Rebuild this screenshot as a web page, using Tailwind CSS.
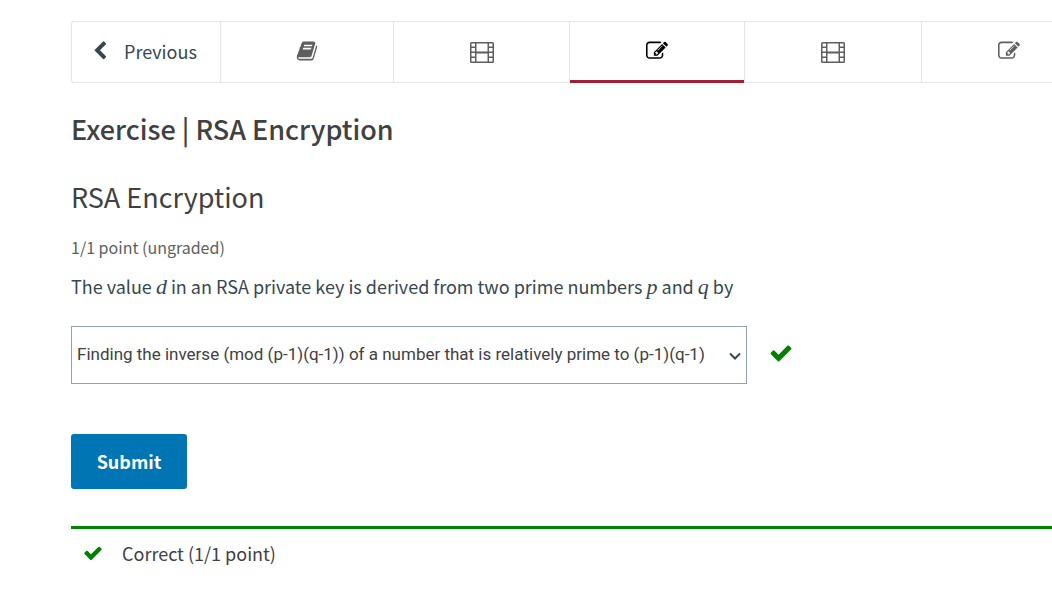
<!DOCTYPE html>
<html lang="en">
<head>
<meta charset="utf-8">
<meta name="viewport" content="width=device-width, initial-scale=1">
<title>Exercise | RSA Encryption</title>
<script src="https://cdn.jsdelivr.net/npm/@tailwindcss/browser@4"></script>
</head>
<body class="overflow-x-hidden bg-white font-['Noto_Sans_CJK_SC','Open_Sans',sans-serif] text-[#414141]">
<svg class="hidden" aria-hidden="true">
  <symbol id="check" viewBox="0 0 1792 1792"><path d="M1671 566q0 40-28 68l-724 724-136 136q-28 28-68 28t-68-28l-136-136-362-362q-28-28-28-68t28-68l136-136q28-28 68-28t68 28l294 295 656-657q28-28 68-28t68 28l136 136q28 28 28 68z"/></symbol>
  <symbol id="edit" viewBox="0 0 1792 1792"><path d="M888 1184l116-116-152-152-116 116v56h96v96h56zm440-720q-16-16-33 1l-350 350q-17 17-1 33t33-1l350-350q17-17 1-33zm80 594v190q0 119-84.500 203.500t-203.500 84.500h-832q-119 0-203.500-84.500t-84.500-203.500v-832q0-119 84.500-203.500t203.500-84.500h832q63 0 117 25 15 7 18 23 3 17-9 29l-49 49q-14 14-32 8-23-6-45-6h-832q-66 0-113 47t-47 113v832q0 66 47 113t113 47h832q66 0 113-47t47-113v-126q0-13 9-22l64-64q15-15 35-7t20 29zm-96-738l288 288-672 672h-288v-288zm444 132l-92 92-288-288 92-92q28-28 68-28t68 28l152 152q28 28 28 68t-28 68z"/></symbol>
  <symbol id="film" viewBox="0 0 24 21"><path fill-rule="evenodd" d="M1.500 0h21Q24 0 24 1.500v18q0 1.500-1.500 1.500h-21Q0 21 0 19.500v-18Q0 0 1.500 0zM1.500 1.500v3h3.500v-3zM1.500 6v3.500h3.500V6zM1.500 11v3.500h3.500V11zM1.500 16v3.500h3.500V16zM6.500 1.500v8h11v-8zM6.500 11.500v8h11v-8zM19 1.500v3h3.500v-3zM19 6v3.500h3.500V6zM19 11v3.500h3.500V11zM19 16v3.500h3.500V16z"/></symbol>
</svg>
<main class="pt-[21px] pl-[71px]">
  <nav aria-label="Unit sequence" class="flex h-[62px] overflow-hidden rounded-l-[3px] border border-r-0 border-[#e5e5e5] text-[#5e5e5e]">
    <button type="button" class="flex w-[148px] flex-none items-center gap-[14px] pb-0.5 pl-[18px] text-lg text-[#37474f]">
      <svg class="size-5 fill-current" viewBox="0 0 1792 1792" aria-hidden="true"><path d="M1427 301l-531 531 531 531q19 19 19 45t-19 45l-166 166q-19 19-45 19t-45-19l-742-742q-19-19-19-45t19-45l742-742q19-19 45-19t45 19l166 166q19 19 19 45t-19 45z"/></svg>
      <span>Previous</span>
    </button>
    <button type="button" aria-label="Reading" class="flex w-[173px] flex-none items-center justify-center border-l border-[#e5e5e5] pb-0.5">
      <svg class="size-[22px] fill-current" viewBox="0 0 1792 1792" aria-hidden="true"><path d="M1703 478q40 57 18 129l-275 906q-19 64-76.500 107.500t-122.500 43.500h-923q-77 0-148.500-53.500t-99.500-131.500q-24-67-2-127 0-4 3-27t4-37q1-8-3-21.500t-3-19.500q2-11 8-21t16.500-23.500 16.500-23.500q23-38 45-91.500t30-91.500q3-10 .5-30t-.5-28q3-11 17-28t17-23q21-36 42-92t25-90q1-9-2.500-32t.5-28q4-13 22-30.500t22-22.500q19-26 42.500-84.500t27.500-96.500q1-8-3-25.500t-2-26.500q2-8 9-18t18-23 17-21q8-12 16.500-30.500t15-35 16-36 19.500-32 26.500-23.500 36-11.500 47.500 5.500l-1 3q38-9 51-9h761q74 0 114 56t18 130l-274 906q-36 119-71.500 153.500t-128.500 34.500h-869q-27 0-38 15-11 16-1 43 24 70 144 70h923q29 0 56-15.500t35-41.500l300-987q7-22 5-57 38 15 59 43zm-1064 2q-4 13 2 22.500t20 9.500h608q13 0 25.500-9.500t16.500-22.500l21-64q4-13-2-22.500t-20-9.500h-608q-13 0-25.500 9.500t-16.500 22.500zm-83 256q-4 13 2 22.500t20 9.500h608q13 0 25.500-9.500t16.500-22.500l21-64q4-13-2-22.500t-20-9.500h-608q-13 0-25.500 9.500t-16.500 22.500z"/></svg>
    </button>
    <button type="button" aria-label="Video" class="flex w-[176px] flex-none items-center justify-center border-l border-[#e5e5e5]">
      <svg class="h-[21px] w-6 fill-current" aria-hidden="true"><use href="#film"/></svg>
    </button>
    <button type="button" aria-label="Exercise" aria-current="page" class="flex w-[175px] flex-none items-center justify-center border-l border-[#e5e5e5] pb-0.5 text-black">
      <svg class="size-[22px] fill-current" aria-hidden="true"><use href="#edit"/></svg>
    </button>
    <button type="button" aria-label="Video" class="flex w-[177px] flex-none items-center justify-center border-l border-[#e5e5e5]">
      <svg class="h-[21px] w-6 fill-current" aria-hidden="true"><use href="#film"/></svg>
    </button>
    <button type="button" aria-label="Exercise" class="flex w-[175px] flex-none items-center justify-center border-l border-[#e5e5e5] pb-0.5">
      <svg class="size-[22px] fill-current" aria-hidden="true"><use href="#edit"/></svg>
    </button>
  </nav>
  <div class="-mt-[3px] ml-[499px] h-[3px] w-[174px]"><div class="relative h-full bg-[#a31f34]"></div></div>
  <h1 class="mt-[26px] text-[27px] leading-10 font-medium">Exercise | RSA Encryption</h1>
  <h2 class="mt-7 text-[27px] leading-10">RSA Encryption</h2>
  <p class="mt-[18px] text-base leading-6 text-[#5e5e5e]">1/1 point (ungraded)</p>
  <p class="mt-[13px] text-lg leading-7 text-[#37474f]"><label for="answer">The value <i class="font-['Liberation_Serif',serif] text-[22px] leading-none">d</i> in an RSA private key is derived from two prime numbers <i class="font-['Liberation_Serif',serif] text-[22px] leading-none">p</i> and <i class="font-['Liberation_Serif',serif] text-[22px] leading-none">q</i> by</label></p>
  <div class="mt-[26px] flex items-center gap-[22px]">
    <div class="relative">
      <select id="answer" class="block h-[58px] w-[676px] appearance-none border border-[#90a4ae] bg-white pr-6 pl-[5px] font-[Roboto,sans-serif] text-[17px] text-[#414141]">
        <option>Finding the inverse (mod (p-1)(q-1)) of a number that is relatively prime to (p-1)(q-1)</option>
      </select>
      <svg class="pointer-events-none absolute top-[26px] right-[6px] h-2 w-3 fill-none stroke-[#37474f] stroke-2" viewBox="0 0 12 8" aria-hidden="true"><path d="M1 1.500l5 5 5-5"/></svg>
    </div>
    <svg class="mb-1 size-6 fill-[#008100]" role="img" aria-label="Correct"><use href="#check"/></svg>
  </div>
  <button type="button" class="mt-[50px] flex h-[55px] w-[116px] items-center justify-center rounded-[3px] bg-[#0075b4] pb-0.5 text-lg font-bold text-white">Submit</button>
  <div role="status" class="mt-[37px] flex items-center gap-[19px] border-t-[3px] border-[#008100] pt-[10px] pl-3">
    <svg class="size-5 fill-[#008100]" aria-hidden="true"><use href="#check"/></svg>
    <span class="text-lg leading-7">Correct (1/1 point)</span>
  </div>
</main>
</body>
</html>
